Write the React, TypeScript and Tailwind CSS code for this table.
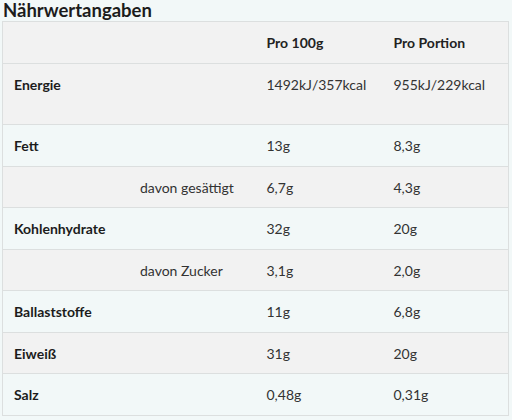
const rows = [
  { label: "Energie", per100: "1492kJ/357kcal", portion: "955kJ/229kcal", tall: true },
  { label: "Fett", per100: "13g", portion: "8,3g" },
  { label: "davon gesättigt", per100: "6,7g", portion: "4,3g", sub: true },
  { label: "Kohlenhydrate", per100: "32g", portion: "20g" },
  { label: "davon Zucker", per100: "3,1g", portion: "2,0g", sub: true },
  { label: "Ballaststoffe", per100: "11g", portion: "6,8g" },
  { label: "Eiweiß", per100: "31g", portion: "20g" },
  { label: "Salz", per100: "0,48g", portion: "0,31g" },
];

const App = () => {
  return (
    <div className="min-h-screen bg-[#f2f8f8] font-['Lato','Liberation_Sans',sans-serif] text-[#222]">
      <h2 className="h-[21px] pl-[3px] pt-[1px] text-[18.5px] leading-[19px] font-bold text-[#1c1c1c]">Nährwertangaben</h2>

      <table className="ml-[2px] w-[507px] table-fixed border-collapse border border-[#dcdfdf] text-[14px]">
        <colgroup>
          <col className="w-[253px]" />
          <col className="w-[127px]" />
          <col />
        </colgroup>
        <thead>
          <tr className="h-[42px] bg-[#f2f2f2] border-b border-[#dcdfdf]">
            <th />
            <th className="px-[11px] text-left font-bold">Pro 100g</th>
            <th className="px-[11px] text-left font-bold">Pro Portion</th>
          </tr>
        </thead>
        <tbody>
          {rows.map((r, i) => (
            <tr
              key={r.label}
              className={`border-b border-[#dcdfdf] ${i % 2 === 0 ? "bg-[#f2f2f2]" : "bg-[#f2f8f8]"} ${r.tall ? "h-[61px] align-top" : "h-[41.5px]"}`}
            >
              <td className={r.sub ? "pl-[137px] pt-[10px] align-top text-[#333]" : "px-[11px] pt-[10px] align-top font-bold text-[#1c1c1c]"}>
                {r.label}
              </td>
              <td className="px-[11px] pt-[10px] align-top text-[#333]">{r.per100}</td>
              <td className="px-[11px] pt-[10px] align-top text-[#333]">{r.portion}</td>
            </tr>
          ))}
        </tbody>
      </table>
    </div>
  );
};

export default App;
